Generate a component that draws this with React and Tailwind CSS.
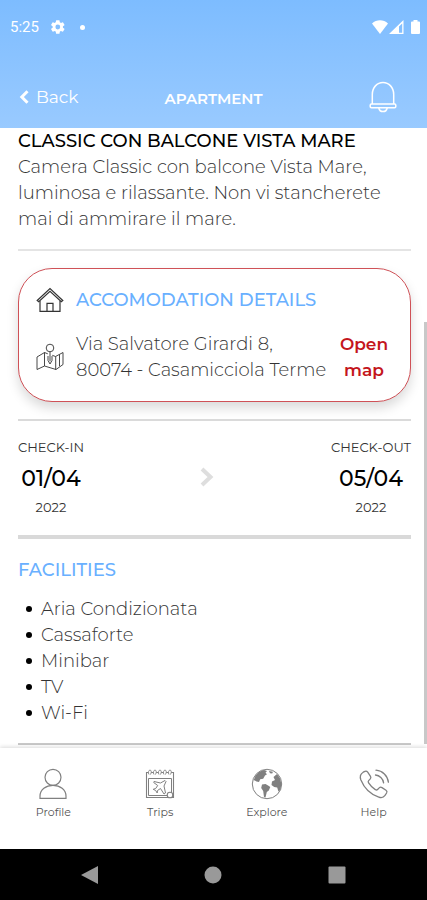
import React from "react";

const facilities = ["Aria Condizionata", "Cassaforte", "Minibar", "TV", "Wi-Fi"];

function GearIcon() {
  return (
    <svg viewBox="0 0 24 24" className="size-4" fill="currentColor" aria-hidden="true">
      <path d="M19.4 13a7.6 7.6 0 0 0 0-2l2.2-1.7a.5.5 0 0 0 .1-.6l-2.1-3.6a.5.5 0 0 0-.6-.2l-2.6 1a7.700 7.700 0 0 0-1.700-1L14.300 2.200a.5.5 0 0 0-.5-.4h-4.200a.5.5 0 0 0-.5.4l-.4 2.700a7.700 7.700 0 0 0-1.700 1l-2.600-1a.5.5 0 0 0-.6.2L1.700 8.700a.5.5 0 0 0 .1.600L4 11a7.600 7.600 0 0 0 0 2l-2.200 1.700a.5.5 0 0 0-.1.600l2.100 3.600c.1.200.4.300.6.200l2.600-1c.5.4 1.100.7 1.700 1l.4 2.700c0 .2.200.4.5.4h4.200c.3 0 .5-.2.5-.4l.4-2.700c.6-.3 1.200-.6 1.700-1l2.600 1c.2.1.5 0 .6-.2l2.100-3.600a.5.5 0 0 0-.1-.6zM11.700 15.600a3.600 3.600 0 1 1 0-7.200 3.600 3.600 0 0 1 0 7.200z" />
    </svg>
  );
}

function StatusIcons() {
  return (
    <svg viewBox="0 0 50 16" className="h-4 w-[50px]" fill="currentColor" aria-hidden="true">
      <path d="M1 4.500C5.500.3 12.500.3 17 4.500L9 15z" />
      <path fillRule="evenodd" d="M18 15 32.500 1v14zM28 13.700h3.200V4.500L28 7.600z" />
      <path d="M40 3.500a1 1 0 0 1 1-1h1.500V1h4v1.500H48a1 1 0 0 1 1 1V14a1 1 0 0 1-1 1h-7a1 1 0 0 1-1-1z" />
    </svg>
  );
}

function BellIcon() {
  return (
    <svg viewBox="0 0 28 32" className="h-8 w-7" fill="none" stroke="currentColor" strokeWidth="1.500" aria-hidden="true">
      <path d="M3.300 23V13.500C3.300 6.500 8 1.500 14 1.500s10.700 5 10.700 12V23" />
      <rect x="1.200" y="23" width="25.600" height="3.800" rx="1.200" />
      <path d="M9.800 27c.5 2.400 2.200 3.600 4.200 3.600s3.700-1.200 4.200-3.600" />
    </svg>
  );
}

function HouseIcon() {
  return (
    <svg viewBox="0 0 28 26" className="h-[26px] w-7" fill="none" stroke="currentColor" strokeWidth="1.200" aria-hidden="true">
      <path d="M1.200 13.500 14 1.500l12.800 12-1.500 1.300L14 4.200 2.700 14.800z" />
      <path d="M4 14v10.300h20V14M11 24.300v-8h6v8" />
    </svg>
  );
}

function MapIcon() {
  return (
    <svg viewBox="0 0 28 28" className="size-7" fill="none" stroke="currentColor" strokeWidth="0.900" strokeLinejoin="round" aria-hidden="true">
      <circle cx="14" cy="5" r="3.800" />
      <path d="M14 8.800v9.500" />
      <path d="M11.800 10.800 8.500 9.500 1 14v12.500l7.500-3.500L20 26.500l7-5V9.500l-7.500 4-3.200-1.200" />
      <path d="M8.500 9.500V23M19.700 13.500v13M12 13v4.500l2 3.500 2-3.500V13M23.500 11.700v11.500" />
    </svg>
  );
}

function ProfileIcon() {
  return (
    <svg viewBox="0 0 32 32" className="size-8" fill="none" stroke="currentColor" strokeWidth="1.200" aria-hidden="true">
      <circle cx="16" cy="9.300" r="8" />
      <path d="M3 30.300v-2C3 21.500 9 17.400 16 17.400s13 4.100 13 10.900v2z" />
    </svg>
  );
}

function TripsIcon() {
  return (
    <svg viewBox="0 0 32 32" className="size-8" fill="none" stroke="currentColor" strokeWidth="1.100" aria-hidden="true">
      <path d="M2.500 4.500h27v25h-27z" />
      <path d="M4.500 10.500h23v17h-23z" strokeWidth="1" />
      <path d="M5 6.500c-1.500-2 0-4.500 1-4.500s2 2 .5 4.500M10 6.500C8.500 4.500 10 2 11 2s2 2 .5 4.500M15 6.500C13.500 4.500 15 2 16 2s2 2 .5 4.500M20 6.500C18.500 4.500 20 2 21 2s2 2 .5 4.500M25 6.500C23.500 4.500 25 2 26 2s2 2 .5 4.500" fill="white" strokeWidth="0.900" />
      <path d="M10 13.500l6.500 1.500 4.500-2.500 1 1-2 4.500 1.500 7-1.500 1-3.500-5.500-3 2-.3 2.500-1.500-2.500-2.500-1.200 2.500-.8 2-3-4-3z" strokeWidth="1" />
      <circle cx="26" cy="27" r="2.800" fill="white" />
    </svg>
  );
}

function GlobeIcon() {
  return (
    <svg viewBox="0 0 32 32" className="size-8" fill="none" aria-hidden="true">
      <circle cx="16" cy="16" r="14.700" stroke="currentColor" strokeWidth="1" />
      <g fill="currentColor">
        <path d="M2.800 12C4 7 8 3 13 2l3 1-1.500 1.800 1.500 1.500-2 1.200-1.800 3.200-3 .6L8 14l-2.500-.6z" />
        <path d="m11 16.500 3.500-.5 3 1.800 1.800 1.200-1.500 3.500-2 1.500-1.300 5.500-1.500-.5-.8-6-2-3z" />
        <path d="m22.500 9 3.500-3 3 4.200L30.400 16l-1 6-2 1.500-1.200-4-3-.5-2.700-2 .5-3.500 3-1.500-.8-1.500z" />
        <path d="m18 3 4 .8-.8 1.700-2.200-.3z" />
      </g>
    </svg>
  );
}

function PhoneIcon() {
  return (
    <svg viewBox="0 0 32 32" className="size-8" fill="none" stroke="currentColor" strokeWidth="1.300" strokeLinejoin="round" strokeLinecap="round" aria-hidden="true">
      <path d="M5.200 4.200 7 3.300c1-.4 2-.1 2.700.8l2.800 4.200c.6 1 .4 2-.4 2.800l-1.500 1.500c-.6.700-.5 1.500 0 2.300 1.800 2.800 4 5 6.700 6.700.8.600 1.700.500 2.300-.1l1.600-1.600c.8-.8 1.800-.9 2.800-.3l4 2.700c1 .7 1.200 1.700.6 2.700l-1.600 2.400c-1.400 2-3.700 2.600-6.200 1.700C12.500 26.400 6.400 20.500 2.900 12 1.600 8.600 2.300 6 5.200 4.200z" />
      <path d="M18 2.200c6.500.5 11.700 5.500 12.400 12M17.500 7c4 .4 7.600 3.700 8.100 7.800" />
    </svg>
  );
}

const tabs = [
  { label: "Profile", Icon: ProfileIcon },
  { label: "Trips", Icon: TripsIcon },
  { label: "Explore", Icon: GlobeIcon },
  { label: "Help", Icon: PhoneIcon },
];

function DateBlock({ label, date, year }) {
  return (
    <div className="flex flex-col items-center text-[13px] text-[#333]">
      <span className="leading-5">{label}</span>
      <span className="mb-[2px] mt-[6px] text-[22px] font-medium leading-8 text-black">{date}</span>
      <span className="leading-5">{year}</span>
    </div>
  );
}

export default function App() {
  return (
    <div className="flex min-h-screen flex-col bg-white font-['Montserrat','Inter',sans-serif] text-[#333]">
      <header className="bg-linear-to-b from-[#7dbcff] to-[#99caff] text-white">
        <div className="flex h-[54px] items-center justify-between pl-[10px] pr-[6px] font-['Roboto',sans-serif]">
          <div className="flex items-center">
            <span className="w-10 text-[15px] leading-6">5:25</span>
            <GearIcon />
            <span className="ml-[14px] size-[5px] rounded-full bg-white" />
          </div>
          <StatusIcons />
        </div>
        <div className="grid h-[74px] grid-cols-3 items-center px-[18px] pt-3">
          <button className="flex items-center gap-[6px] text-[17px] leading-6">
            <svg viewBox="0 0 12 14" className="h-[14px] w-3" fill="none" stroke="currentColor" strokeWidth="3" aria-hidden="true">
              <path d="M9.500 1.200 3.800 7l5.700 5.800" />
            </svg>
            Back
          </button>
          <h1 className="mt-1 text-center text-[15px] font-semibold leading-6">APARTMENT</h1>
          <button aria-label="Notifications" className="mr-3 justify-self-end">
            <BellIcon />
          </button>
        </div>
      </header>

      <main className="relative flex-1 pl-[18px] pr-4 text-[18px] leading-[26px]">
        <h2 className="font-medium text-black">CLASSIC CON BALCONE VISTA MARE</h2>
        <p className="font-light">
          Camera Classic con balcone Vista Mare, luminosa e rilassante. Non vi stancherete mai di ammirare il mare.
        </p>
        <hr className="mt-[17px] border-t-2 border-[#e4e4e4]" />

        <section className="mt-[17px] grid grid-cols-[40px_1fr_auto] items-center gap-y-[18px] rounded-[34px] border border-[#cf5157] bg-white pb-[18px] pl-[17px] pr-5 pt-[18px] shadow-[0_6px_12px_rgba(0,0,0,0.15)]">
          <HouseIcon />
          <h2 className="col-span-2 font-medium text-[#69b0ff]">ACCOMODATION DETAILS</h2>
          <MapIcon />
          <address className="whitespace-nowrap font-light not-italic">
            Via Salvatore Girardi 8,
            <br />
            80074 - Casamicciola Terme
          </address>
          <a href="#map" className="w-[52px] text-center text-[17px] font-semibold text-[#c4161c]">Open map</a>
        </section>

        <hr className="mt-[17px] border-t-2 border-[#dadada]" />

        <section className="mt-4 flex items-center justify-between">
          <DateBlock label="CHECK-IN" date="01/04" year="2022" />
          <svg viewBox="0 0 14 20" className="h-5 w-[14px] text-[#dedede]" fill="none" stroke="currentColor" strokeWidth="4" aria-hidden="true">
            <path d="M2 2l8.500 8L2 18" />
          </svg>
          <DateBlock label="CHECK-OUT" date="05/04" year="2022" />
        </section>

        <hr className="mt-[18px] border-t-4 border-[#d9d9d9]" />

        <section className="mt-[18px]">
          <h2 className="font-medium text-[#69b0ff]">FACILITIES</h2>
          <ul className="mt-[13px]">
            {facilities.map((item) => (
              <li key={item} className="flex items-center pl-2 font-light">
                <span className="mr-[9px] size-[6px] rounded-full bg-black" />
                {item}
              </li>
            ))}
          </ul>
        </section>
        <hr className="mt-[17px] border-t-2 border-[#c8c8c8]" />
        <div className="absolute bottom-1 right-0 top-[194px] w-[3px] bg-[#c8c8c8]" />
      </main>

      <nav className="relative grid grid-cols-4 bg-white pb-[29px] pt-5 shadow-[0_-1px_4px_rgba(0,0,0,0.15)]">
        {tabs.map(({ label, Icon }) => (
          <a key={label} href={"#" + label.toLowerCase()} className="flex flex-col items-center gap-1 text-[11px] leading-4 text-[#555]">
            <span className="text-[#808080]">
              <Icon />
            </span>
            {label}
          </a>
        ))}
      </nav>

      <div className="flex h-[51px] items-center justify-around bg-black px-7 text-[#999]">
        <button aria-label="Back">
          <svg viewBox="0 0 18 18" className="size-[18px]" fill="currentColor"><path d="M17 0v18L0 9z" /></svg>
        </button>
        <button aria-label="Home">
          <svg viewBox="0 0 18 18" className="size-[18px]" fill="currentColor"><circle cx="9" cy="9" r="8.500" /></svg>
        </button>
        <button aria-label="Recent apps">
          <svg viewBox="0 0 18 18" className="size-[18px]" fill="currentColor"><rect x="0.500" y="0.500" width="17" height="17" rx="1" /></svg>
        </button>
      </div>
    </div>
  );
}
